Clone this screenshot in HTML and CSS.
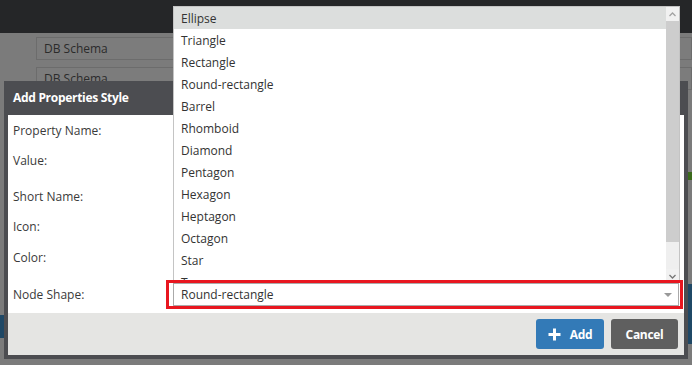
FILE: index.html
```html
<!DOCTYPE html>
<html lang="en">
<head>
  <meta charset="UTF-8" />
  <title>Add Properties Style</title>
  <link rel="stylesheet" href="styles.css">
</head>
<body>

<div class="page">
  <div class="topbar"></div>
  <div class="schema-list">
    <div class="schema-input">DB Schema</div>
    <div class="schema-input">DB Schema</div>
  </div>
  <span class="strip strip-left"></span>
  <span class="strip strip-green"></span>
  <span class="strip strip-blue"></span>
</div>

<div class="modal">
  <div class="modal-header">Add Properties Style</div>
  <div class="modal-body">
    <div class="label">Property Name:</div><div></div>
    <div class="label">Value:</div><div></div>
    <div class="label">Short Name:</div><div></div>
    <div class="label">Icon:</div><div></div>
    <div class="label">Color:</div><div></div>
    <div class="label">Node Shape:</div>
    <div class="highlight">
      <div class="select">
        <span>Round-rectangle</span>
        <span class="caret"></span>
      </div>
    </div>
  </div>
  <div class="modal-footer">
    <button class="btn btn-add">
      <svg width="13" height="13" viewBox="0 0 13 13"><path d="M6.5 0.5v12M0.5 6.5h12" stroke="#fff" stroke-width="3"/></svg>
      Add
    </button>
    <button class="btn btn-cancel">Cancel</button>
  </div>
</div>

<div class="dropdown">
  <ul class="options">
    <li class="active">Ellipse</li>
    <li>Triangle</li>
    <li>Rectangle</li>
    <li>Round-rectangle</li>
    <li>Barrel</li>
    <li>Rhomboid</li>
    <li>Diamond</li>
    <li>Pentagon</li>
    <li>Hexagon</li>
    <li>Heptagon</li>
    <li>Octagon</li>
    <li>Star</li>
    <li>Tag</li>
    <li>Vee</li>
  </ul>
  <div class="scrollbar">
    <div class="sb-btn">
      <svg width="7" height="5" viewBox="0 0 7 5"><path d="M0.5 4L3.5 1L6.5 4" fill="none" stroke="#a3a3a3" stroke-width="1.3"/></svg>
    </div>
    <div class="sb-thumb"></div>
    <div class="sb-track"></div>
    <div class="sb-btn">
      <svg width="7" height="5" viewBox="0 0 7 5"><path d="M0.5 1L3.5 4L6.5 1" fill="none" stroke="#777" stroke-width="1.3"/></svg>
    </div>
  </div>
</div>

</body>
</html>
```

FILE: styles.css
```css
body {
  margin: 0;
  width: 692px;
  height: 365px;
  overflow: hidden;
  position: relative;
  background-color: #7b7b7b;
  font-family: 'Open Sans', 'Noto Sans', sans-serif;
  font-size: 12px;
  color: #333;
}
.page {
  height: 100%;
}
.topbar {
  height: 33px;
  background-color: #252628;
}
.schema-list {
  padding: 4px 0 0 36px;
}
.schema-input {
  height: 21px;
  line-height: 21px;
  padding-left: 7px;
  margin-bottom: 7px;
  border: 1px solid #6c6c6c;
  background-color: #7c7c7c;
  color: #2b2b2b;
}
.strip {
  position: absolute;
  width: 4px;
}
.strip-left {
  left: 0;
  top: 315px;
  height: 23px;
  background-color: #1f4866;
}
.strip-green {
  right: 0;
  top: 172px;
  height: 8px;
  background-color: #3b6a1c;
}
.strip-blue {
  right: 0;
  top: 284px;
  height: 60px;
  background-color: #1f4866;
}
.modal {
  position: absolute;
  left: 4px;
  top: 81px;
  width: 684px;
  box-sizing: border-box;
  border: 4px solid #4c4d51;
  border-top: 0;
  border-radius: 3px 3px 0 0;
  background-color: #fff;
}
.modal-header {
  height: 34px;
  line-height: 34px;
  margin: 0 -4px;
  padding-left: 9px;
  background-color: #4c4d51;
  color: #fff;
  font-weight: bold;
  letter-spacing: -0.3px;
}
.modal-body {
  display: grid;
  grid-template-columns: 158px 1fr;
  grid-template-rows: 29px 31px 40px 20px 43px 31px;
  align-items: center;
  padding: 1px 1px 3px 5px;
}
.label {
  color: #3a3a3a;
}
.highlight {
  position: relative;
  z-index: 1;
  background: #fff;
  border: 3px solid #e8161f;
  padding: 0 1px 0 4px;
  margin-left: -5px;
}
.select {
  height: 21px;
  border: 1px solid #aaa;
  background: #fff;
  display: flex;
  align-items: center;
  justify-content: space-between;
  padding: 0 6px 0 7px;
}
.caret {
  width: 0;
  height: 0;
  border-left: 4px solid transparent;
  border-right: 4px solid transparent;
  border-top: 4px solid #999;
}
.modal-footer {
  height: 42px;
  background-color: #e5e5e3;
  display: flex;
  justify-content: flex-end;
  align-items: center;
  gap: 7px;
  padding-right: 6px;
}
.btn {
  height: 30px;
  border: none;
  border-radius: 3px;
  color: #fff;
  font-family: 'Open Sans', 'Noto Sans', sans-serif;
  font-size: 12px;
  font-weight: bold;
  letter-spacing: -0.3px;
  cursor: pointer;
  display: flex;
  align-items: center;
  justify-content: center;
}
.btn-add {
  width: 68px;
  gap: 9px;
  background-color: #337ab7;
}
.btn-cancel {
  width: 67px;
  background-color: #5f5f5f;
}
.dropdown {
  position: absolute;
  left: 173px;
  top: 6px;
  width: 507px;
  height: 277px;
  box-sizing: border-box;
  border: 1px solid #c4c4c4;
  border-bottom: 0;
  background: #fff;
  display: flex;
  overflow: hidden;
}
.options {
  list-style: none;
  margin: 0;
  padding: 0;
  flex: 1;
}
.options li {
  height: 22px;
  line-height: 24px;
  padding-left: 7px;
  color: #333;
}
.options li.active {
  background-color: #dcdedd;
}
.scrollbar {
  width: 13px;
  display: flex;
  flex-direction: column;
  background-color: #efefef;
}
.sb-btn {
  height: 14px;
  display: flex;
  align-items: center;
  justify-content: center;
  background-color: #f1f1f1;
}
.sb-thumb {
  height: 221px;
  background-color: #cdcdcd;
}
.sb-track {
  flex: 1;
}
```
